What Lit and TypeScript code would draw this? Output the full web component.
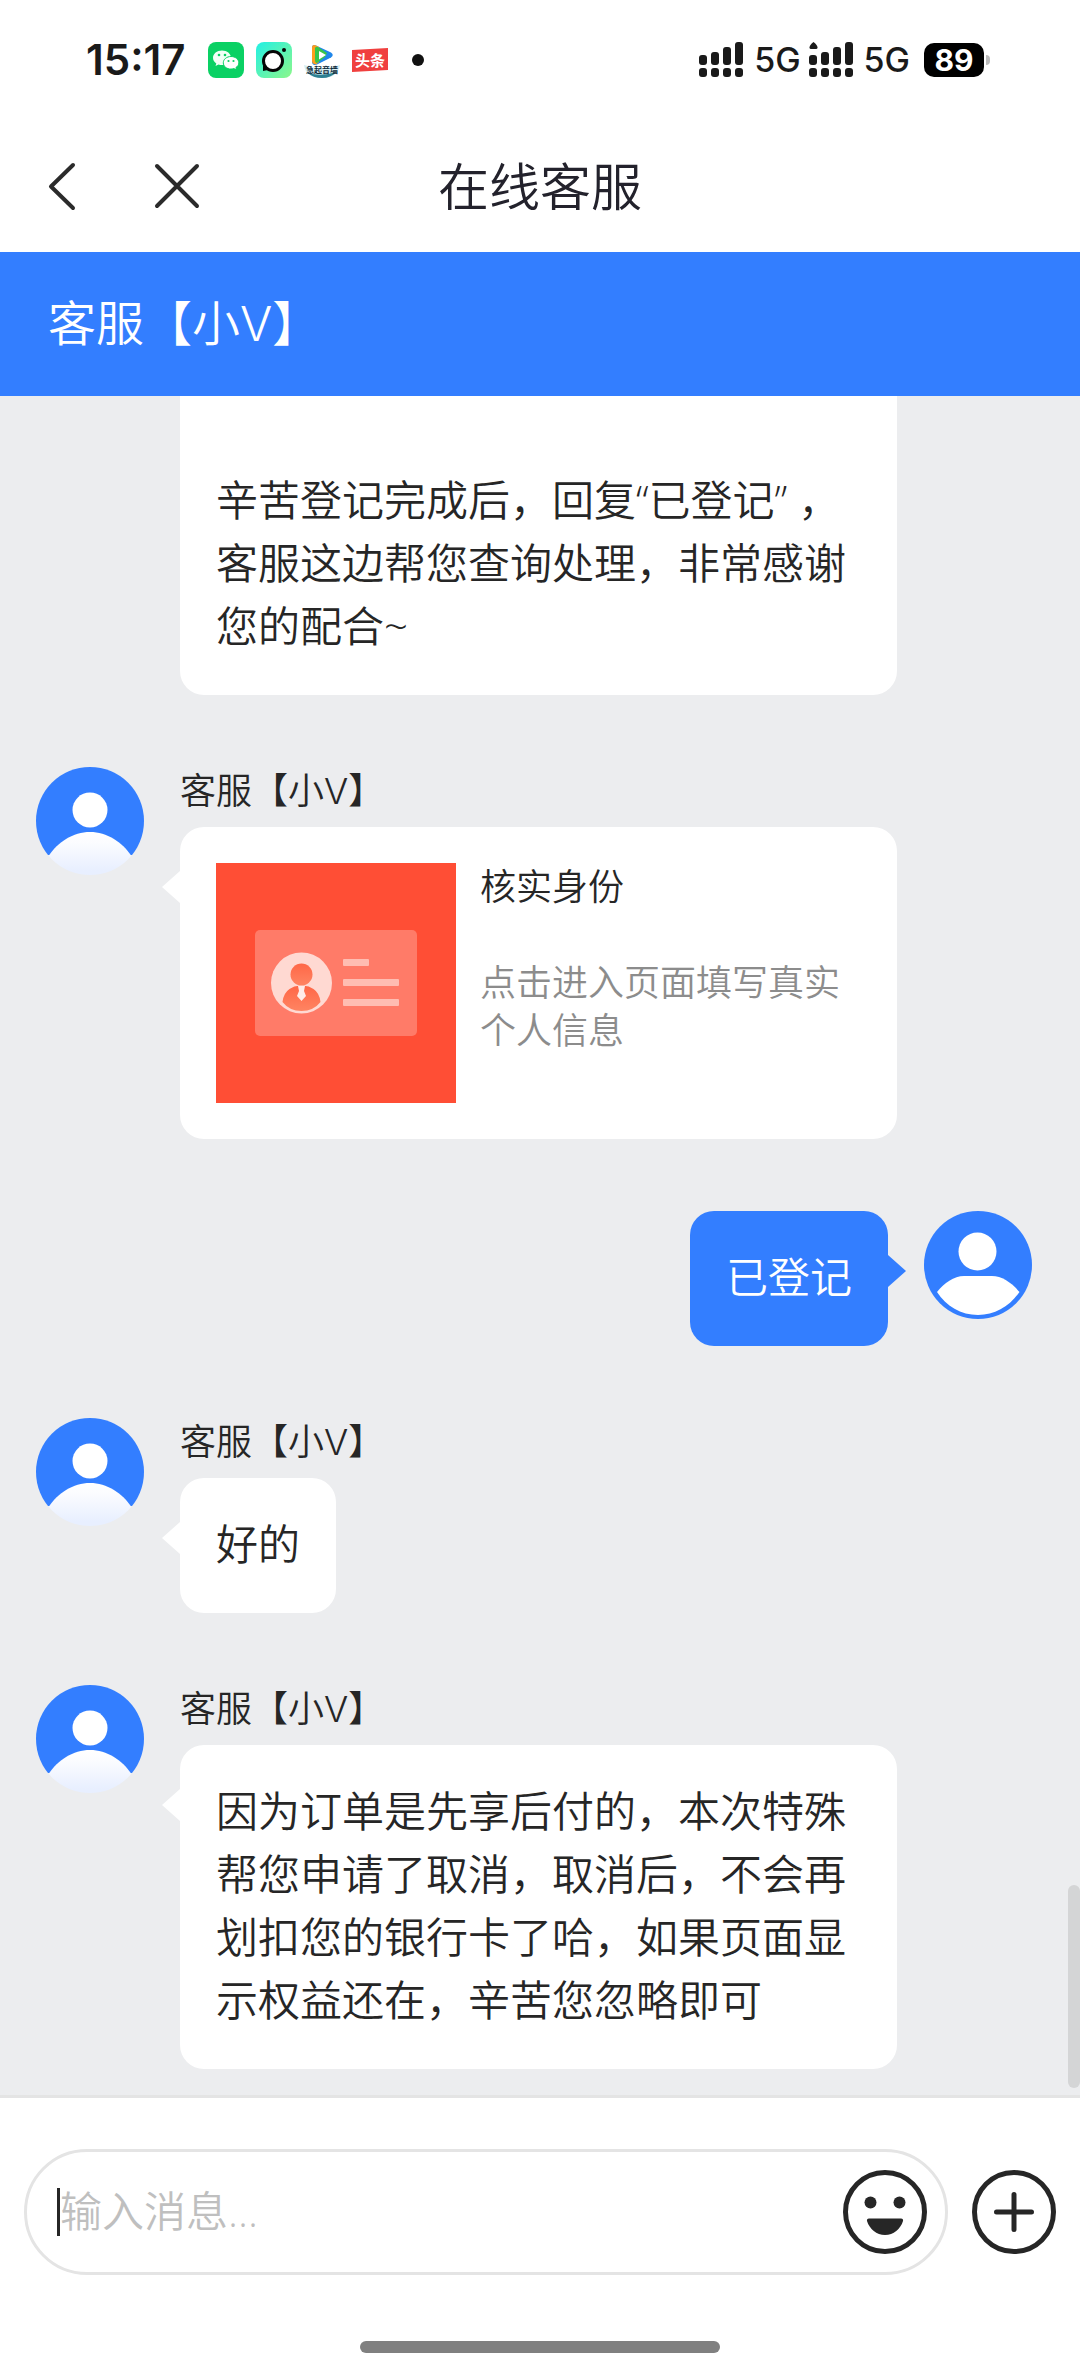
import { LitElement, html, css, svg, nothing } from "lit";
import { customElement, property } from "lit/decorators.js";

interface Message {
  from: "agent" | "user";
  text?: string;
  card?: { title: string; desc: string };
  /** The head of the message (avatar, name) has scrolled out of view. */
  scrolled?: boolean;
}

const AGENT = "客服【小V】";

const MESSAGES: Message[] = [
  {
    from: "agent",
    scrolled: true,
    text: "\n辛苦登记完成后，回复“已登记” ，客服这边帮您查询处理，非常感谢您的配合~",
  },
  { from: "agent", card: { title: "核实身份", desc: "点击进入页面填写真实个人信息" } },
  { from: "user", text: "已登记" },
  { from: "agent", text: "好的" },
  {
    from: "agent",
    text: "因为订单是先享后付的，本次特殊帮您申请了取消，取消后，不会再划扣您的银行卡了哈，如果页面显示权益还在，辛苦您忽略即可",
  },
];

@customElement("status-bar")
export class StatusBar extends LitElement {
  static styles = css`
    :host {
      display: block;
      color: #1a1a1a;
      font-family: Inter, "Noto Sans CJK SC", sans-serif;
    }
    .bar {
      display: flex;
      align-items: center;
      justify-content: space-between;
      height: 120px;
      padding: 0 90px 0 86px;
      box-sizing: border-box;
    }
    .side {
      display: flex;
      align-items: center;
    }
    .apps {
      display: flex;
      align-items: center;
      gap: 12px;
      margin-left: 22px;
    }
    .time {
      font-size: 42px;
      font-weight: 600;
      line-height: 48px;
    }
    .net {
      font-size: 34px;
      font-weight: 500;
      line-height: 40px;
      margin: 0 8px 0 10px;
    }
    .battery {
      display: flex;
      align-items: center;
      gap: 2px;
      margin-left: 6px;
    }
    .level {
      width: 60px;
      height: 34px;
      border-radius: 10px;
      background: #000;
      color: #fff;
      font-size: 30px;
      font-weight: 700;
      line-height: 34px;
      text-align: center;
    }
    .nub {
      width: 4px;
      height: 10px;
      border-radius: 0 4px 4px 0;
      background: #bbb;
    }
    svg {
      display: block;
    }
  `;

  private signal(extra: boolean) {
    return html`<svg width="45" height="36" viewBox="0 0 45 36" fill="#1a1a1a">
      ${extra ? svg`<path d="M4.500 0q4 3 4 5.500q0 1.500-1.500 1.500h-5q-1.500 0-1.500-1.500q0-2.500 4-5.500z" />` : nothing}
      <rect x="0" y="13" width="8" height="10" rx="3" />
      <rect x="12" y="10" width="8" height="13" rx="3" />
      <rect x="24" y="5" width="8" height="18" rx="3" />
      <rect x="36" y="0" width="8" height="23" rx="3" />
      <rect x="0" y="26" width="8" height="9" rx="3" />
      <rect x="12" y="26" width="8" height="9" rx="3" />
      <rect x="24" y="26" width="8" height="9" rx="3" />
      <rect x="36" y="26" width="8" height="9" rx="3" />
    </svg>`;
  }

  render() {
    return html`
      <div class="bar">
        <div class="side">
          <span class="time">15:17</span>
          <div class="apps">
            <svg width="36" height="36" viewBox="0 0 36 36">
              <rect width="36" height="36" rx="8" fill="#0ad164" />
              <path d="M14 8.500c-5 0-9 3.200-9 7.300 0 2.300 1.300 4.300 3.300 5.600l-.8 2.600 3-1.500c1.100.4 2.300.6 3.500.6 5 0 9-3.200 9-7.300s-4-7.300-9-7.300z" fill="#f2fff6" />
              <circle cx="11" cy="13" r="1.300" fill="#0ad164" />
              <circle cx="17" cy="13" r="1.300" fill="#0ad164" />
              <path d="M23 14.500c-4.300 0-7.700 2.800-7.700 6.300s3.400 6.300 7.700 6.300c1 0 2-.2 2.900-.5l2.700 1.400-.7-2.400c1.800-1.100 2.900-2.900 2.900-4.800 0-3.500-3.500-6.300-7.800-6.300z" fill="#fff" stroke="#0ad164" stroke-width="1" />
              <circle cx="20.500" cy="19" r="1.100" fill="#0ad164" />
              <circle cx="25.500" cy="19" r="1.100" fill="#0ad164" />
            </svg>
            <svg width="36" height="36" viewBox="0 0 36 36">
              <defs>
                <linearGradient id="mint" x1="0" y1="0" x2="1" y2="1">
                  <stop offset="0" stop-color="#22f0e4" />
                  <stop offset="1" stop-color="#8cf78a" />
                </linearGradient>
              </defs>
              <rect width="36" height="36" rx="8" fill="url(#mint)" />
              <circle cx="17" cy="19" r="9.500" fill="#fff" stroke="#050505" stroke-width="3" />
              <path d="M7 23v6l5-1z" fill="#050505" />
              <circle cx="28" cy="8" r="2" fill="#050505" />
            </svg>
            <svg width="36" height="36" viewBox="0 0 36 36">
              <path d="M8 6q0-4 4-2.500l15 7q3.500 2.500 0 5L13 22.500q-5 1.500-5-3z" fill="#1f86ea" />
              <path d="M8 6q0-4 4-2.500l3 1.500V20l-3 2.500Q8 22 8 19z" fill="#ff9d1c" />
              <path d="M11 6q1-2 3-1l9 6-2 4-8 6q-2 0-2-3z" fill="#35c54a" />
              <path d="M15 9l7 4-7 4.500z" fill="#fff" />
              <path d="M0 23q18 6 36 0-2 13-18 13T0 23z" fill="#d5edf1" />
              <path d="M4 31q14 4 28-1-5 6-14 6T4 31z" fill="#2d7f92" />
              <text x="18" y="31" font-size="8" font-weight="600" text-anchor="middle" fill="#0d2a3a">急起音墙</text>
            </svg>
            <svg width="36" height="24" viewBox="0 0 36 24">
              <path d="M0 2L36 0v22L0 24z" fill="#f0403f" />
              <text x="18" y="18" font-size="15" font-weight="600" text-anchor="middle" fill="#fff">头条</text>
            </svg>
            <svg width="36" height="12" viewBox="0 0 36 12"><circle cx="18" cy="6" r="6" fill="#111" /></svg>
          </div>
        </div>
        <div class="side">
          ${this.signal(false)}
          <span class="net">5G</span>
          ${this.signal(true)}
          <span class="net">5G</span>
          <div class="battery"><span class="level">89</span><span class="nub"></span></div>
        </div>
      </div>
    `;
  }
}

@customElement("chat-avatar")
export class ChatAvatar extends LitElement {
  @property() who: "agent" | "user" = "agent";

  static styles = css`
    :host {
      display: block;
      flex: none;
      width: 108px;
      height: 108px;
    }
    svg {
      display: block;
    }
  `;

  render() {
    return this.who === "agent"
      ? html`<svg width="108" height="108" viewBox="0 0 108 108">
          <defs>
            <clipPath id="disc"><circle cx="54" cy="54" r="54" /></clipPath>
            <linearGradient id="fade" x1="0" y1="0" x2="0" y2="1">
              <stop offset="0" stop-color="#ffffff" />
              <stop offset="0.250" stop-color="#fbfcff" />
              <stop offset="0.900" stop-color="#e8efff" />
            </linearGradient>
          </defs>
          <g clip-path="url(#disc)">
            <path d="M0 0H108V88H0z" fill="#337eff" />
            <path d="M12.500 89C22 75 37 65 54 65s32 10 41.500 24V108h-83z" fill="url(#fade)" />
          </g>
          <circle cx="54" cy="43" r="17.500" fill="#fff" />
        </svg>`
      : html`<svg width="108" height="108" viewBox="0 0 108 108">
          <circle cx="54" cy="54" r="54" fill="#337eff" />
          <circle cx="53.500" cy="40.500" r="19" fill="#fff" />
          <path d="M13 81C20 72 30 65 40 65H68C78 65 88 72 95.500 81C86 95 71 104 54 104S22 95 13 81z" fill="#fff" />
        </svg>`;
  }
}

@customElement("chat-message")
export class ChatMessage extends LitElement {
  @property({ attribute: false }) message!: Message;

  static styles = css`
    :host {
      display: block;
      flex: none;
    }
    .row {
      display: flex;
      align-items: flex-start;
      gap: 36px;
      padding: 0 183px 0 36px;
    }
    .row.user {
      flex-direction: row-reverse;
      padding: 0 48px 0 183px;
    }
    .row.scrolled {
      padding-left: 180px;
    }
    .body {
      display: flex;
      flex: 1;
      flex-direction: column;
      align-items: flex-start;
      min-width: 0;
    }
    .user .body {
      align-items: flex-end;
    }
    .name {
      margin-bottom: 12px;
      font-family: Inter, "Noto Sans CJK SC", sans-serif;
      font-size: 36px;
      line-height: 48px;
    }
    .bubble {
      position: relative;
      box-sizing: border-box;
      margin: 0;
      padding: 34px 36px 38px;
      border-radius: 24px;
      background: #fff;
      font-size: 42px;
      line-height: 63px;
      white-space: pre-wrap;
    }
    .bubble::before {
      content: "";
      position: absolute;
      top: 44px;
      right: 100%;
      width: 18px;
      height: 32px;
      background: inherit;
      clip-path: polygon(100% 0, 0 50%, 100% 100%);
    }
    .scrolled .bubble::before {
      content: none;
    }
    .user .bubble {
      background: #337eff;
      color: #fff;
    }
    .user .bubble::before {
      right: auto;
      left: 100%;
      clip-path: polygon(0 0, 100% 50%, 0 100%);
    }
    .card {
      display: flex;
      gap: 24px;
      width: 100%;
      padding: 36px;
      color: inherit;
      text-decoration: none;
      white-space: normal;
    }
    .thumb {
      display: block;
      flex: none;
    }
    .info {
      display: flex;
      flex-direction: column;
      gap: 48px;
      font-size: 36px;
      line-height: 48px;
    }
    .desc {
      color: #8c8c8c;
    }
  `;

  private card(card: { title: string; desc: string }) {
    return html`
      <a class="bubble card" href="#verify">
        <svg class="thumb" width="240" height="240" viewBox="0 0 240 240">
          <defs>
            <linearGradient id="person" x1="0" y1="0" x2="0" y2="1">
              <stop offset="0" stop-color="#ff6747" />
              <stop offset="1" stop-color="#ff8462" />
            </linearGradient>
          </defs>
          <rect width="240" height="240" fill="#ff4e35" />
          <rect x="39" y="67" width="162" height="106" rx="5" fill="#ff7b68" />
          <circle cx="85.500" cy="120" r="30.500" fill="#ffd9d2" />
          <path d="M66.500 139q1-9 7-13t12-3q6-1 12 3t7 13q-7 9-19 9t-19-9z" fill="url(#person)" />
          <circle cx="85.500" cy="111.500" r="11" fill="url(#person)" />
          <path d="M82 123h7l-1 5 2 5-4.500 5-4.500-5 2-5z" fill="#ffece8" />
          <rect x="127" y="96" width="26" height="7" rx="1" fill="#ffbdb2" />
          <rect x="127" y="116" width="56" height="7" rx="1" fill="#ffbdb2" />
          <rect x="127" y="136" width="56" height="7" rx="1" fill="#ffbdb2" />
        </svg>
        <span class="info">
          <span>${card.title}</span>
          <span class="desc">${card.desc}</span>
        </span>
      </a>
    `;
  }

  render() {
    const m = this.message;
    return html`
      <div class="row ${m.from} ${m.scrolled ? "scrolled" : ""}">
        ${m.scrolled ? nothing : html`<chat-avatar .who=${m.from}></chat-avatar>`}
        <div class="body">
          ${m.from === "agent" && !m.scrolled ? html`<span class="name">${AGENT}</span>` : nothing}
          ${m.card ? this.card(m.card) : html`<p class="bubble">${m.text}</p>`}
        </div>
      </div>
    `;
  }
}

@customElement("chat-composer")
export class ChatComposer extends LitElement {
  static styles = css`
    :host {
      display: block;
      flex: none;
      border-top: 3px solid #e4e4e4;
      background: #fff;
    }
    .line {
      display: flex;
      align-items: center;
      gap: 24px;
      padding: 51px 24px 66px;
    }
    .field {
      display: flex;
      flex: 1;
      align-items: center;
      box-sizing: border-box;
      min-width: 0;
      height: 126px;
      padding: 0 18px 0 30px;
      border: 3px solid #e4e4e4;
      border-radius: 63px;
    }
    .caret {
      width: 3px;
      height: 48px;
      background: #262626;
    }
    input {
      flex: 1;
      min-width: 0;
      height: 63px;
      padding: 0 0 4px;
      box-sizing: border-box;
      border: 0;
      outline: 0;
      background: none;
      color: #262626;
      font: inherit;
      font-size: 42px;
    }
    input::placeholder {
      color: #bfbfbf;
      opacity: 1;
    }
    button {
      display: block;
      flex: none;
      padding: 0;
      border: 0;
      background: none;
    }
    svg {
      display: block;
    }
    .home {
      width: 360px;
      height: 12px;
      margin: 0 auto 21px;
      border-radius: 6px;
      background: #808080;
    }
  `;

  render() {
    return html`
      <div class="line">
        <div class="field">
          <span class="caret"></span>
          <input type="text" placeholder="输入消息..." aria-label="输入消息" />
          <button type="button" aria-label="表情">
            <svg width="84" height="84" viewBox="0 0 84 84" fill="#262626">
              <circle cx="42" cy="42" r="39.500" fill="none" stroke="#262626" stroke-width="5" />
              <circle cx="27.500" cy="32.500" r="6" />
              <circle cx="56.500" cy="32.500" r="6" />
              <path d="M26 48.500h32q2.500 0 2 2.500c-2.500 8-9.500 14-18 14s-15.500-6-18-14q-.5-2.500 2-2.500z" />
            </svg>
          </button>
        </div>
        <button type="button" aria-label="更多">
          <svg width="84" height="84" viewBox="0 0 84 84" fill="none" stroke="#262626" stroke-width="5">
            <circle cx="42" cy="42" r="39.500" />
            <path d="M24.500 42h35M42 24.500v35" stroke-linecap="round" />
          </svg>
        </button>
      </div>
      <div class="home"></div>
    `;
  }
}

@customElement("app-root")
export class AppRoot extends LitElement {
  static styles = css`
    :host {
      display: flex;
      flex-direction: column;
      height: 100vh;
      overflow: hidden;
      background: #fff;
      color: #262626;
      font-family: "Open Sans", "Noto Sans CJK SC", sans-serif;
      font-weight: 350;
    }
    .nav {
      display: grid;
      grid-template-columns: 1fr auto 1fr;
      align-items: center;
      flex: none;
      height: 132px;
      padding: 0 32px;
    }
    .actions {
      display: flex;
      gap: 56px;
    }
    .actions button {
      padding: 0;
      border: 0;
      background: none;
    }
    .actions svg {
      display: block;
    }
    h1,
    h2 {
      margin: 0;
      font-weight: inherit;
    }
    h1 {
      font-size: 51px;
      line-height: 72px;
      color: #23222c;
    }
    h2 {
      flex: none;
      padding: 36px 48px;
      background: #337eff;
      color: #fff;
      font-family: Inter, "Noto Sans CJK SC", sans-serif;
      font-size: 48px;
      line-height: 72px;
    }
    .chat {
      position: relative;
      display: flex;
      flex: 1;
      flex-direction: column;
      justify-content: flex-end;
      gap: 72px;
      min-height: 0;
      overflow: hidden;
      box-sizing: border-box;
      padding-bottom: 26px;
      background: #ecedef;
    }
    .thumb {
      position: absolute;
      right: 0;
      bottom: 7px;
      width: 12px;
      height: 203px;
      border-radius: 6px;
      background: #d4d5d6;
    }
  `;

  render() {
    return html`
      <status-bar></status-bar>
      <header class="nav">
        <div class="actions">
          <button type="button" aria-label="返回">
            <svg width="60" height="60" viewBox="0 0 60 60" fill="none" stroke="#2b2b2b" stroke-width="4" stroke-linecap="round" stroke-linejoin="round">
              <path d="M41 9L19 30.500L41 52" />
            </svg>
          </button>
          <button type="button" aria-label="关闭">
            <svg width="60" height="60" viewBox="0 0 60 60" fill="none" stroke="#2b2b2b" stroke-width="4" stroke-linecap="round">
              <path d="M9 10L49 50M49 10L9 50" />
            </svg>
          </button>
        </div>
        <h1>在线客服</h1>
      </header>
      <h2>${AGENT}</h2>
      <main class="chat">
        ${MESSAGES.map((m) => html`<chat-message .message=${m}></chat-message>`)}
        <div class="thumb"></div>
      </main>
      <chat-composer></chat-composer>
    `;
  }
}
